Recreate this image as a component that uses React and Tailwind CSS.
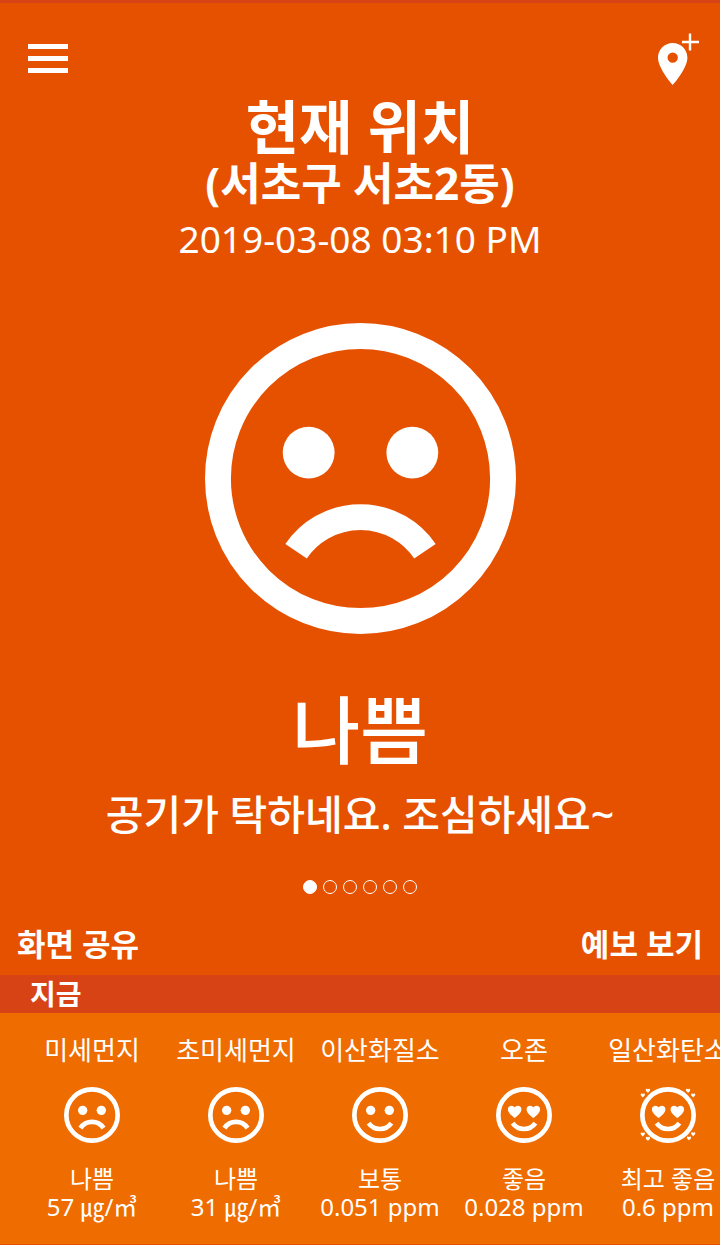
const SMALL_HEARTS = [
  [-10.8, -8.4],
  [-8.6, -10.4],
  [8.6, -10.4],
  [10.8, -8.4],
  [-10.8, 8.3],
  [-8.6, 10.2],
  [9, 10],
  [10.8, 8.2],
];

const POLLUTANTS = [
  { name: "미세먼지", mood: "bad", grade: "나쁨", value: "57 ㎍/㎥" },
  { name: "초미세먼지", mood: "bad", grade: "나쁨", value: "31 ㎍/㎥" },
  { name: "이산화질소", mood: "normal", grade: "보통", value: "0.051 ppm" },
  { name: "오존", mood: "good", grade: "좋음", value: "0.028 ppm" },
  { name: "일산화탄소", mood: "best", grade: "최고 좋음", value: "0.6 ppm" },
];

const PAGES = [1, 2, 3, 4, 5, 6];

function Heart({ x, y, scale = 1 }) {
  return (
    <path
      transform={`translate(${x} ${y}) scale(${scale})`}
      d="M0 2.7 C-1.2 1.7 -2.9 0.5 -2.9 -1.1 C-2.9 -2 -2.2 -2.6 -1.4 -2.6 C-0.8 -2.6 -0.3 -2.3 0 -1.8 C0.3 -2.3 0.8 -2.6 1.4 -2.6 C2.2 -2.6 2.9 -2 2.9 -1.1 C2.9 0.5 1.2 1.7 0 2.7 Z"
    />
  );
}

function Face({ mood, className }) {
  const hearts = mood === "good" || mood === "best";

  return (
    <svg viewBox="-12 -12 24 24" className={className} fill="white" aria-hidden="true">
      <circle r="11" fill="none" stroke="white" strokeWidth="2" />
      {hearts ? (
        <>
          <Heart x={-4} y={-1.4} />
          <Heart x={4} y={-1.4} />
        </>
      ) : (
        <>
          <circle cx="-4" cy="-2" r="2" />
          <circle cx="4" cy="-2" r="2" />
        </>
      )}
      <path
        d={mood === "bad" ? "M-4.97 5.62 A6 6 0 0 1 4.97 5.62" : "M-4.88 3.5 A6 6 0 0 0 4.88 3.5"}
        fill="none"
        stroke="white"
        strokeWidth="2"
      />
      {mood === "best" &&
        SMALL_HEARTS.map(([x, y]) => <Heart key={`${x},${y}`} x={x} y={y} scale={0.32} />)}
    </svg>
  );
}

function PollutantCard({ name, mood, grade, value }) {
  return (
    <li className="flex w-36 shrink-0 flex-col items-center whitespace-nowrap">
      <h3 className="text-[26px] leading-[34px]">{name}</h3>
      <Face mood={mood} className="mt-5 h-14 w-14 overflow-visible" />
      <p className="mt-5 text-2xl leading-8">{grade}</p>
      <p className="text-2xl leading-6">{value}</p>
    </li>
  );
}

export default function App() {
  return (
    <div className="flex min-h-screen flex-col overflow-hidden border-t-3 border-[#d84315] bg-[#e65100] font-['Noto_Sans','Noto_Sans_CJK_KR',sans-serif] text-white">
      <header className="flex items-center justify-between pt-[30px] pr-5 pl-7">
        <button type="button" aria-label="메뉴">
          <svg viewBox="0 0 40 30" className="h-[30px] w-10" fill="white">
            <rect y="0" width="40" height="5" />
            <rect y="12" width="40" height="5" />
            <rect y="24" width="40" height="5" />
          </svg>
        </button>
        <button type="button" aria-label="위치 추가">
          <svg viewBox="0 0 42 52" className="h-[52px] w-[42px]" fill="white">
            <path
              fillRule="evenodd"
              d="M14.7 10 C6.5 10 0 16.5 0 24.7 C0 35.5 14.7 52 14.7 52 C14.7 52 29.4 35.5 29.4 24.7 C29.4 16.5 22.9 10 14.7 10 Z M14.7 19.4 A5.2 5.2 0 1 1 14.7 29.8 A5.2 5.2 0 1 1 14.7 19.4 Z"
            />
            <path d="M24 9 H41 M32 0.5 V17.5" stroke="white" strokeWidth="2.4" />
          </svg>
        </button>
      </header>

      <main className="flex flex-1 flex-col items-center pt-2.5 text-center">
        <h1 className="text-[58px] leading-16 font-bold">현재 위치</h1>
        <h2 className="text-[44px] leading-12 font-bold">(서초구 서초2동)</h2>
        <time dateTime="2019-03-08T15:10" className="mt-2 text-[37px] leading-12">
          2019-03-08 03:10 PM
        </time>

        <Face mood="bad" className="mt-15 h-[311px] w-[311px]" />

        <p className="mt-12 text-[74px] leading-24 font-medium">나쁨</p>
        <p className="mt-2 text-[41px] leading-14 font-medium">공기가 탁하네요. 조심하세요~</p>

        <nav className="mt-[38px] flex gap-1.5" aria-label="페이지">
          {PAGES.map((page) => (
            <button
              key={page}
              type="button"
              aria-label={`${page}`}
              className={`h-3.5 w-3.5 rounded-full border border-white ${page === 1 ? "bg-white" : ""}`}
            />
          ))}
        </nav>
      </main>

      <div className="flex justify-between px-[17px] pb-[7px] text-[31px] leading-12 font-bold">
        <button type="button">화면 공유</button>
        <button type="button">예보 보기</button>
      </div>

      <section>
        <h2 className="bg-[#d84315] px-[30px] text-[28px] leading-[38px] font-bold">지금</h2>
        <ul className="flex overflow-x-auto border-b border-[#e65100] bg-[#ef6c00] pt-5 pb-[25px] pl-5 [scrollbar-width:none]">
          {POLLUTANTS.map((item) => (
            <PollutantCard key={item.name} {...item} />
          ))}
        </ul>
      </section>
    </div>
  );
}
